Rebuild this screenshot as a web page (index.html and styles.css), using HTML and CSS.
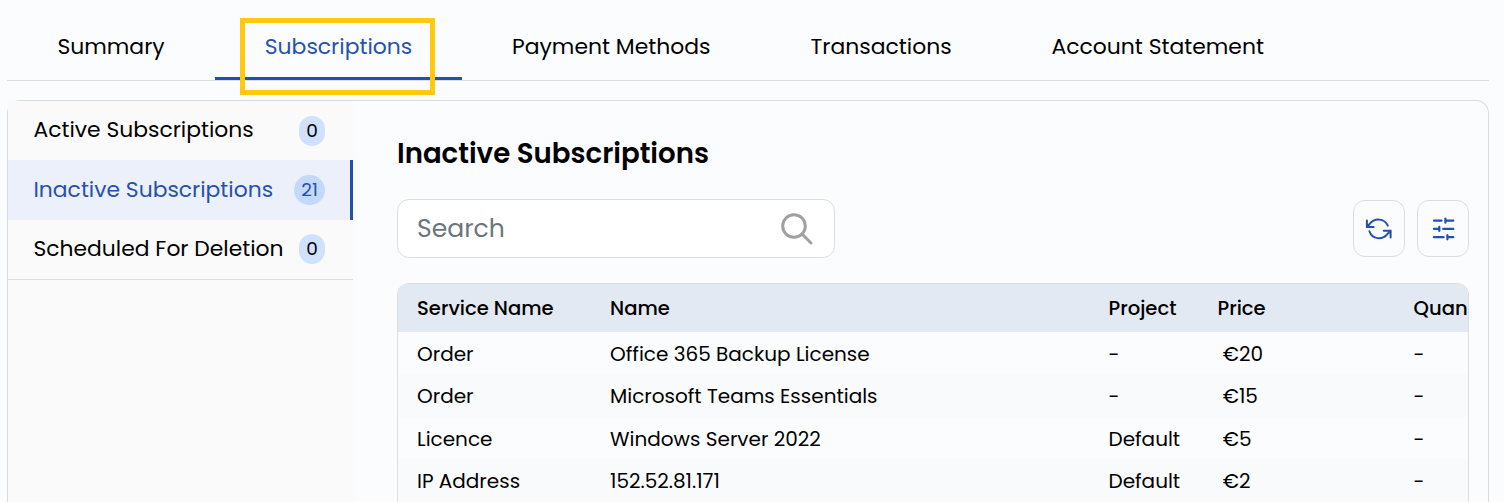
FILE: index.html
```html
<!DOCTYPE html>
<html lang="en">
<head>
<meta charset="utf-8">
<title>Subscriptions</title>
<link rel="stylesheet" href="styles.css">
</head>
<body>
<nav class="tabs">
  <a class="tab">Summary</a>
  <a class="tab tab-active">Subscriptions<i class="highlight"></i></a>
  <a class="tab">Payment Methods</a>
  <a class="tab">Transactions</a>
  <a class="tab">Account Statement</a>
</nav>
<main class="panel">
  <aside class="sidebar">
    <a class="side-item"><span>Active Subscriptions</span><b class="badge">0</b></a>
    <a class="side-item side-active"><span>Inactive Subscriptions</span><b class="badge">21</b></a>
    <a class="side-item"><span>Scheduled For Deletion</span><b class="badge">0</b></a>
  </aside>
  <section class="content">
    <h1 class="title">Inactive Subscriptions</h1>
    <div class="toolbar">
      <div class="search"><span>Search</span>
        <svg class="search-icon" viewBox="0 0 34 34"><circle cx="14" cy="14" r="11.3"/><path d="M22.3 22.3L31 31"/></svg>
      </div>
      <div class="actions">
        <button class="action"><svg class="icon" viewBox="0 0 28 28"><path d="M22.8 10.6C19.5 3.2 9.6 2.6 4.6 9L2 11.9M1.9 5.6V11.9H8.6M4.4 16.2C7.2 24.6 17.4 25.4 22.6 18.8L25.4 15.9M18.8 15.8H25.6V22.4"/></svg></button>
        <button class="action"><svg class="icon icon-sliders" viewBox="0 0 28 28"><path d="M5 5.6H12.6M16.4 5.6H24.3M16.4 3.5V7.7M5 13.9H10M10.3 11.8V16M14.2 13.9H24.3M5 22.2H14.6M18.4 22.2H24.3M18.4 20.1V24.3"/></svg></button>
      </div>
    </div>
    <div class="table">
      <div class="row head"><span>Service Name</span><span>Name</span><span>Project</span><span>Price</span><span>Quan</span></div>
      <div class="row"><span>Order</span><span>Office 365 Backup License</span><span>-</span><span class="price">€20</span><span>-</span></div>
      <div class="row"><span>Order</span><span>Microsoft Teams Essentials</span><span>-</span><span class="price">€15</span><span>-</span></div>
      <div class="row"><span>Licence</span><span>Windows Server 2022</span><span>Default</span><span class="price">€5</span><span>-</span></div>
      <div class="row"><span>IP Address</span><span>152.52.81.171</span><span>Default</span><span class="price">€2</span><span>-</span></div>
    </div>
  </section>
</main>
</body>
</html>
```
FILE: styles.css
```css
* { box-sizing: border-box; }
body {
  margin: 0;
  height: 502px;
  overflow: hidden;
  padding: 0 15px 0 7px;
  background: #fbfcfe;
  color: #000;
  font-family: Poppins, Inter, sans-serif;
}
.tabs {
  display: grid;
  grid-template-columns: 208px 247px 298.5px 241.2px 312px;
  height: 81px;
  border-bottom: 1px solid #dedede;
  font-size: 21.9px;
}
.tab { position: relative; display: flex; justify-content: center; height: 80px; padding-top: 15px; line-height: 64px; white-space: nowrap; border-bottom: 3px solid transparent; }
.tab-active { color: #2651ae; border-bottom-color: #2250ad; }
.highlight { position: absolute; left: 25px; top: 18px; width: 195px; height: 77px; border: 5px solid #ffc90e; z-index: 2; }
.panel { display: flex; height: 402px; margin-top: 19px; border: 1px solid #dcdcdc; border-bottom: 0; border-radius: 13px 13px 0 0; }
.sidebar { width: 345px; background: #fafafa; font-size: 21.85px; }
.side-item { display: flex; align-items: center; justify-content: space-between; height: 59px; padding: 0 28px 0 25.5px; white-space: nowrap; }
.side-item > span { padding-bottom: 2px; }
.side-item:last-child { height: 60px; padding-bottom: 1px; border-bottom: 1px solid #dedede; }
.side-active { height: 60px; padding-right: 25px; background: #ebf0fa; color: #2651ae; border-right: 3px solid #2250ad; }
.badge { padding: 0 7.2px; border-radius: 15px; background: #d0e1fd; font-size: 18.5px; font-weight: 400; line-height: 30px; }
.side-active .badge { background: #c3d9fb; }
.content { width: 1135px; padding: 32px 19px 0 44px; }
.title { margin: 0; font-size: 27.6px; font-weight: 600; line-height: 42px; }
.toolbar { display: flex; justify-content: space-between; align-items: center; height: 59px; margin-top: 24px; }
.search { display: flex; align-items: center; justify-content: space-between; width: 438px; height: 59px; padding: 0 20px 0 19px; border: 1px solid #dedede; border-radius: 12px; background: #fff; color: #6c757d; font-size: 25.1px; }
.search-icon { width: 34px; height: 34px; fill: none; stroke: #a0a0a0; stroke-width: 3; stroke-linecap: round; }
.actions { display: flex; gap: 12px; }
.action { display: flex; align-items: center; justify-content: center; width: 52px; height: 57px; padding: 0; border: 1px solid #dcdcdc; border-radius: 12px; background: #fbfcfe; }
.icon { width: 28px; height: 28px; fill: none; stroke: #2250ad; stroke-width: 2; stroke-linecap: round; stroke-linejoin: miter; }
.icon-sliders { stroke-width: 2.2; }
.table { width: 1072px; height: 219px; margin-top: 25px; overflow: hidden; border: 1px solid #dedede; border-bottom: 0; border-radius: 12px 12px 0 0; font-size: 20px; }
.row { display: grid; grid-template-columns: 193px 498.5px 109px 196px 55px; height: 42.4px; padding-left: 19px; line-height: 44px; white-space: nowrap; }
.row:nth-child(odd) { background: #f9fafb; }
.row.head { height: 48px; background: #e3e9f3; font-size: 19.6px; font-weight: 500; line-height: 49px; }
.price { padding-left: 5.2px; }
```
